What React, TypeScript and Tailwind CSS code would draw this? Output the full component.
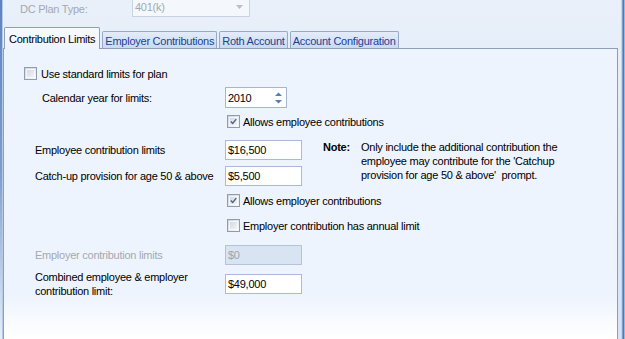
import React from "react";

function CheckBox({ checked }: { checked?: boolean }) {
  return (
    <span className="flex h-[13px] w-[13px] shrink-0 items-center justify-center border border-[#8f9db4] bg-gradient-to-br from-[#cfd4dc] to-[#f7f8fa] p-px">
      <span className="flex h-full w-full items-center justify-center border border-white/70">
        {checked && (
          <svg width="9" height="9" viewBox="0 0 9 9">
            <path d="M1 4.5 L3.5 7 L8 1.5" fill="none" stroke="#4a6292" strokeWidth="1.8" />
          </svg>
        )}
      </span>
    </span>
  );
}

function Field({ value, disabled }: { value: string; disabled?: boolean }) {
  return (
    <div
      className={
        disabled
          ? "flex h-[20px] w-[77px] items-center border border-[#b3c3dc] bg-[#d9e4f3] px-[2px] text-[#9aa3ae]"
          : "flex h-[20px] w-[77px] items-center border border-[#a9bbd8] bg-white px-[2px]"
      }
    >
      {value}
    </div>
  );
}

function Tab({ label, active }: { label: string; active?: boolean }) {
  if (active) {
    return (
      <div className="relative z-10 -mb-px flex h-[22px] items-center rounded-t-[2px] border border-b-0 border-[#8d9dba] bg-gradient-to-b from-[#f7faff] to-[#eef4fd] px-[4px] pt-px text-black">
        {label}
      </div>
    );
  }
  return (
    <div className="flex h-[17px] items-center rounded-t-[2px] border border-b-0 border-[#97a9c9] bg-gradient-to-b from-[#e4ecf9] to-[#c9daf2] px-[2px] pt-[2px] text-[#1c3f94]">
      {label}
    </div>
  );
}

export default function App() {
  return (
    <div className="relative flex h-[339px] w-[625px] overflow-hidden bg-gradient-to-b from-[#e9f0fa] to-[#d6e4f6] font-['Liberation_Sans',Arial,sans-serif] text-[11px] leading-[14px] tracking-[-0.25px] text-black">
      {/* window left edge */}
      <div className="w-[3px] shrink-0 border-r border-[#b6c9e6] bg-gradient-to-b from-[#5c84c0] via-[#7c9ccc] to-[#e6eef9]" />

      <div className="flex min-w-0 flex-1 flex-col">
        {/* plan type row */}
        <div className="flex h-[17px] items-center">
          <span className="ml-[17px] w-[112px] text-[#a3a9b1]">DC Plan Type:</span>
          <div className="-mt-[2px] flex h-[19px] w-[118px] items-center justify-between border border-t-0 border-[#c8d3e2] bg-[#f4f7fb] pl-[2px] pr-[6px] text-[#a3a9b1]">
            <span>401(k)</span>
            <svg width="7" height="4" viewBox="0 0 7 4">
              <path d="M0 0 H7 L3.5 4 Z" fill="#b8bec8" />
            </svg>
          </div>
        </div>

        {/* tabs */}
        <div className="mt-[10px] flex items-end gap-[2px] pl-px">
          <Tab label="Contribution Limits" active />
          <Tab label="Employer Contributions" />
          <Tab label="Roth Account" />
          <Tab label="Account Configuration" />
        </div>

        {/* tab panel */}
        <div className="mr-[3px] flex flex-1 flex-col border border-b-0 border-[#8d9dba] bg-gradient-to-b from-[#eef4fd] from-[85%] to-white">
          <div className="ml-[20px] mt-[18px] flex h-[13px] items-center gap-[4px]">
            <CheckBox />
            <span>Use standard limits for plan</span>
          </div>

          <div className="mt-[7px] flex items-center">
            <span className="w-[221px] pl-[38px]">Calendar year for limits:</span>
            <div className="flex h-[21px] w-[62px] items-center justify-between border border-[#a3b6d6] bg-white pl-[2px] pr-[4px]">
              <span>2010</span>
              <svg width="7" height="12" viewBox="0 0 7 12">
                <path d="M0 4 L3.5 0.5 L7 4 Z" fill="#5a7cb4" />
                <path d="M0 8 L3.5 11.5 L7 8 Z" fill="#5a7cb4" />
              </svg>
            </div>
          </div>

          <div className="ml-[223px] mt-[7px] flex h-[13px] items-center gap-[3px]">
            <CheckBox checked />
            <span>Allows employee contributions</span>
          </div>

          <div className="mt-[12px] flex h-[46px]">
            <div className="flex flex-col gap-[6px]">
              <div className="flex items-center">
                <span className="w-[221px] pl-[31px]">Employee contribution limits</span>
                <Field value="$16,500" />
              </div>
              <div className="flex items-center">
                <span className="w-[221px] pl-[31px]">Catch-up provision for age 50 &amp; above</span>
                <Field value="$5,500" />
              </div>
            </div>
            <div className="ml-[21px] flex whitespace-nowrap">
              <span className="w-[38px] shrink-0 font-bold">Note:</span>
              <span>
                Only include the additional contribution the
                <br />
                employee may contribute for the 'Catchup
                <br />
                provision for age 50 &amp; above'&nbsp; prompt.
              </span>
            </div>
          </div>

          <div className="ml-[223px] mt-[8px] flex h-[13px] items-center gap-[3px]">
            <CheckBox checked />
            <span>Allows employer contributions</span>
          </div>

          <div className="ml-[223px] mt-[12px] flex h-[13px] items-center gap-[3px]">
            <CheckBox />
            <span>Employer contribution has annual limit</span>
          </div>

          <div className="mt-[13px] flex items-center">
            <span className="w-[221px] pl-[31px] text-[#a3a9b1]">Employer contribution limits</span>
            <Field value="$0" disabled />
          </div>

          <div className="mt-[5px] flex items-center">
            <span className="w-[221px] pl-[31px]">
              Combined employee &amp; employer
              <br />
              contribution limit:
            </span>
            <Field value="$49,000" />
          </div>
        </div>
      </div>

      {/* window right edge */}
      <div className="flex w-[4px] shrink-0">
        <div className="w-px bg-[#c5d5ec]" />
        <div className="w-px bg-[#7d9fd0]" />
        <div className="w-px bg-[#4f79b8]" />
        <div className="w-px bg-[#9bb7df]" />
      </div>
    </div>
  );
}
